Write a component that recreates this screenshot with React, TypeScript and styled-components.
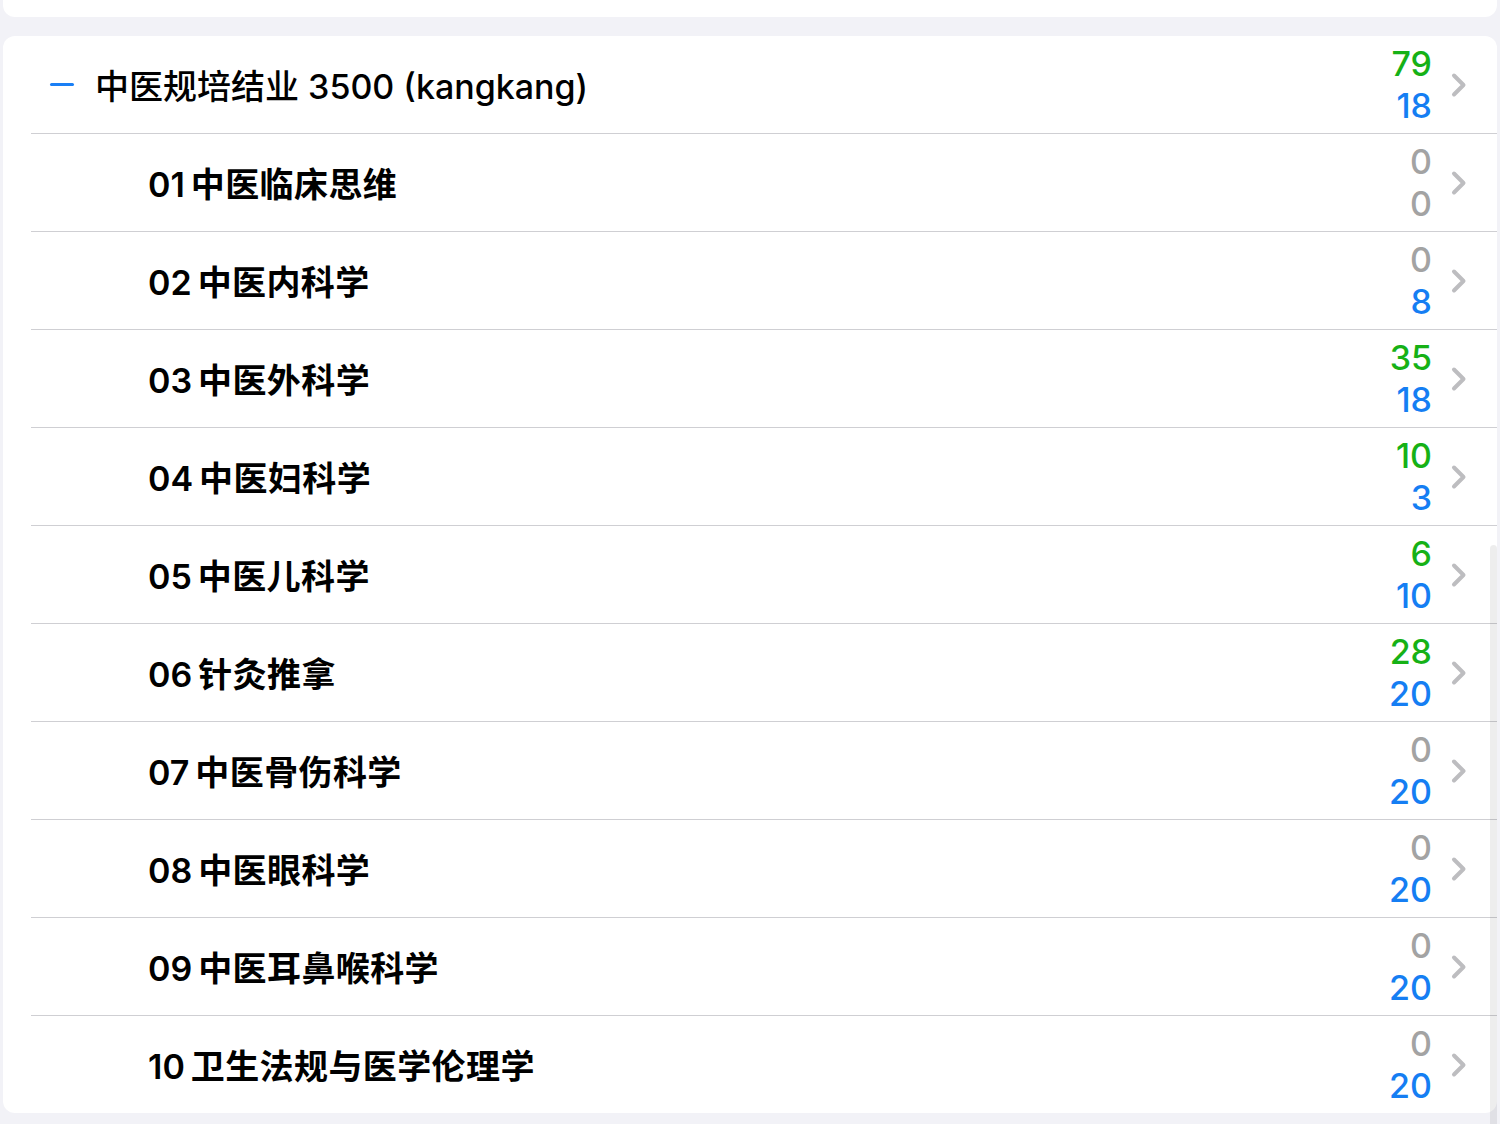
import React from "react";
import styled, { createGlobalStyle } from "styled-components";

const Global = createGlobalStyle`
  html, body { margin: 0; padding: 0; }
  body {
    background: #f2f2f7;
    font-family: Inter, "Noto Sans CJK SC", sans-serif;
    -webkit-font-smoothing: antialiased;
  }
`;

const Page = styled.div`
  position: relative;
  width: 1500px;
  height: 1124px;
  overflow: hidden;
  background: #f2f2f7;
  display: flex;
  flex-direction: column;
  gap: 19px;
`;

const TopCard = styled.div`
  margin: 0 3px;
  height: 17px;
  background: #fff;
  border-radius: 0 0 12px 12px;
  overflow: hidden;
  display: flex;
  justify-content: flex-end;
  align-items: flex-end;
  padding-right: 65px;
`;

const ClippedZero = styled.span`
  font-size: 34px;
  font-weight: 500;
  line-height: 34px;
  color: #a3a3a3;
  margin-bottom: 13px;
`;

const Card = styled.div`
  margin: 0 3px;
  background: #fff;
  border-radius: 12px;
  overflow: hidden;
  display: flex;
  flex-direction: column;
`;

const Row = styled.div<{ $last?: boolean }>`
  margin-left: 28px;
  height: ${(p) => (p.$last ? 97 : 98)}px;
  box-sizing: border-box;
  border-bottom: ${(p) => (p.$last ? "none" : "1px solid #cfcfd3")};
  display: flex;
  align-items: center;
  padding-right: 30px;
`;

const Minus = styled.span`
  width: 24px;
  height: 3px;
  border-radius: 2px;
  background: #1a7ff5;
  margin-left: 19px;
  margin-right: 21px;
  flex: none;
`;

const Title = styled.div<{ $indent?: number; $strong?: boolean }>`
  flex: 1;
  display: flex;
  align-items: baseline;
  padding-left: ${(p) => p.$indent ?? 0}px;
  font-size: 34px;
  font-weight: ${(p) => (p.$strong ? 600 : 500)};
  color: #000;
  white-space: nowrap;
`;

const Code = styled.span`
  margin-right: 6px;
`;

const Name = styled.span`
  letter-spacing: 0.4px;
`;

const Counts = styled.div`
  display: flex;
  flex-direction: column;
  align-items: flex-end;
  margin-right: 19px;
`;

const Count = styled.span<{ $tone: "green" | "blue" | "gray" }>`
  font-size: 34px;
  font-weight: 500;
  line-height: 42px;
  color: ${(p) =>
    p.$tone === "green" ? "#16b116" : p.$tone === "blue" ? "#157ef3" : "#a3a3a3"};
`;

const Chevron = styled.svg`
  width: 16px;
  height: 26px;
  flex: none;
`;

const ScrollBar = styled.div`
  position: absolute;
  right: 3px;
  top: 545px;
  width: 7px;
  height: 600px;
  border-radius: 4px;
  background: rgba(0, 0, 0, 0.07);
`;

const Arrow = () => (
  <Chevron viewBox="0 0 16 26">
    <path
      d="M3 3.5 L12.5 13 L3 22.5"
      fill="none"
      stroke="#bdbdc0"
      strokeWidth="4"
      strokeLinecap="round"
      strokeLinejoin="round"
    />
  </Chevron>
);

const tone = (n: number, def: "green" | "blue") => (n === 0 ? "gray" : def);

const items: [string, string, number, number][] = [
  ["01", "中医临床思维", 0, 0],
  ["02", "中医内科学", 0, 8],
  ["03", "中医外科学", 35, 18],
  ["04", "中医妇科学", 10, 3],
  ["05", "中医儿科学", 6, 10],
  ["06", "针灸推拿", 28, 20],
  ["07", "中医骨伤科学", 0, 20],
  ["08", "中医眼科学", 0, 20],
  ["09", "中医耳鼻喉科学", 0, 20],
  ["10", "卫生法规与医学伦理学", 0, 20],
];

const Numbers = ({ a, b }: { a: number; b: number }) => (
  <Counts>
    <Count $tone={tone(a, "green")}>{a}</Count>
    <Count $tone={tone(b, "blue")}>{b}</Count>
  </Counts>
);

export default function App() {
  return (
    <Page>
      <Global />
      <TopCard>
        <ClippedZero>0</ClippedZero>
      </TopCard>
      <Card>
        <Row>
          <Minus />
          <Title>中医规培结业 3500 (kangkang)</Title>
          <Numbers a={79} b={18} />
          <Arrow />
        </Row>
        {items.map(([code, name, a, b], i) => (
          <Row key={code} $last={i === items.length - 1}>
            <Title $indent={117} $strong>
              <Code>{code}</Code>
              <Name>{name}</Name>
            </Title>
            <Numbers a={a} b={b} />
            <Arrow />
          </Row>
        ))}
      </Card>
      <ScrollBar />
    </Page>
  );
}
